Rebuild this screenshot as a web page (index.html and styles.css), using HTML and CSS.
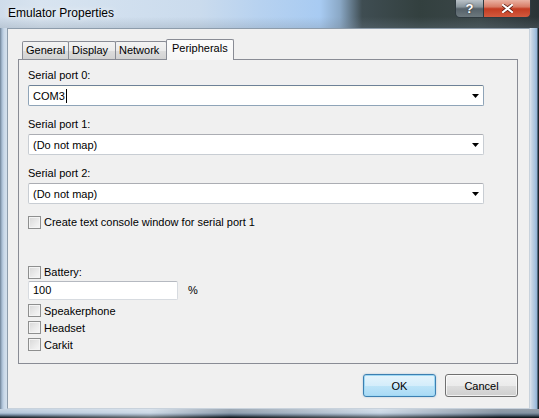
FILE: index.html
```html
<!DOCTYPE html>
<html>
<head>
<meta charset="utf-8">
<link rel="stylesheet" href="styles.css">
</head>
<body>
<div class="window">
  <div class="titlebar">
    <span class="title">Emulator Properties</span>
    <div class="caption-btns">
      <span class="cbtn help">?</span>
      <span class="cbtn close"><svg width="11" height="9" viewBox="0 0 11 9"><path d="M1 1 L10 8 M10 1 L1 8" stroke="#5a1a10" stroke-width="3.6" stroke-linecap="square"/><path d="M1 1 L10 8 M10 1 L1 8" stroke="#fff" stroke-width="2.2" stroke-linecap="square"/></svg></span>
    </div>
  </div>
  <div class="middle">
    <div class="frame-l"></div>
    <div class="client">
      <div class="tabs">
        <span class="tab t-general">General</span>
        <span class="tab t-display">Display</span>
        <span class="tab t-network">Network</span>
        <span class="tab t-periph selected">Peripherals</span>
      </div>
      <div class="panel">
        <div class="label first">Serial port 0:</div>
        <div class="combo focused"><span class="value">COM3<span class="caret"></span></span><svg class="arrow" width="7" height="4" viewBox="0 0 7 4"><polygon points="0,0 7,0 3.5,4" fill="#000"/></svg></div>
        <div class="label">Serial port 1:</div>
        <div class="combo"><span class="value">(Do not map)</span><svg class="arrow" width="7" height="4" viewBox="0 0 7 4"><polygon points="0,0 7,0 3.5,4" fill="#000"/></svg></div>
        <div class="label">Serial port 2:</div>
        <div class="combo"><span class="value">(Do not map)</span><svg class="arrow" width="7" height="4" viewBox="0 0 7 4"><polygon points="0,0 7,0 3.5,4" fill="#000"/></svg></div>
        <div class="check console"><span class="box"></span><span>Create text console window for serial port 1</span></div>
        <div class="check battery"><span class="box"></span><span>Battery:</span></div>
        <div class="battery-row"><div class="textbox">100</div><span class="pct">%</span></div>
        <div class="check first-opt"><span class="box"></span><span>Speakerphone</span></div>
        <div class="check"><span class="box"></span><span>Headset</span></div>
        <div class="check"><span class="box"></span><span>Carkit</span></div>
      </div>
      <div class="buttons">
        <span class="btn ok">OK</span>
        <span class="btn">Cancel</span>
      </div>
    </div>
    <div class="frame-r"></div>
  </div>
  <div class="frame-b"></div>
</div>
</body>
</html>
```
FILE: styles.css
```css
* { box-sizing: border-box; }
html, body { margin: 0; padding: 0; }
body {
  width: 539px;
  height: 418px;
  overflow: hidden;
  background: #1a2226;
  font-family: "Liberation Sans", Arial, sans-serif;
  font-size: 11px;
  color: #000;
}
.window {
  width: 539px;
  height: 418px;
  display: flex;
  flex-direction: column;
}
.titlebar {
  height: 28px;
  display: flex;
  align-items: flex-start;
  background:
    linear-gradient(to bottom, rgba(255,255,255,0) 60%, rgba(120,135,150,0.25) 100%),
    linear-gradient(to right, #cfdcea 0, #d8e4f0 40px, #cadbed 200px, #b7d2f0 260px, #a8cbf2 320px, #8aa8c6 340px, #3f4d52 362px, #33403f 420px, #3a4648 480px, #2a3336 539px);
}
.title {
  padding-left: 8px;
  line-height: 27px;
  font-size: 12px;
  color: #000;
  text-shadow: 0 0 6px rgba(255,255,255,0.9);
}
.caption-btns {
  margin-left: auto;
  margin-right: 8px;
  display: flex;
}
.cbtn {
  height: 18px;
  display: flex;
  align-items: center;
  justify-content: center;
  border: 1px solid #2f3a40;
  border-top: none;
}
.help {
  width: 28px;
  border-radius: 0 0 0 5px;
  border-right: none;
  background: linear-gradient(to bottom, #b9c2c8 0, #8a969d 40%, #56626a 52%, #6c787e 100%);
  color: #fff;
  font-weight: bold;
  font-size: 13px;
  text-shadow: 0 0 2px #222;
}
.close {
  width: 48px;
  border-radius: 0 0 5px 0;
  background: linear-gradient(to bottom, #eab3a4 0, #d87c66 40%, #c43c22 52%, #d35a3e 100%);
}
.middle {
  height: 381px;
  display: flex;
}
.frame-l {
  width: 7px;
  background: linear-gradient(to right, #6f8296 0, #a8bdd3 2px, #c9d8e8 4px, #d4e0ec 7px);
}
.frame-r {
  width: 9px;
  background: linear-gradient(to right, #dde5ee 0, #c3d3e3 2px, #a9c3de 5px, #8fb1d3 7px, #1c252c 8px);
}
.frame-b {
  height: 9px;
  background:
    linear-gradient(to right, rgba(255,255,255,0) 0, rgba(255,255,255,0.35) 150px, rgba(0,0,0,0.2) 230px, rgba(255,255,255,0.3) 380px, rgba(0,0,0,0.25) 500px),
    linear-gradient(to bottom, #c6d4e2 0, #b1c4d8 4px, #6e859b 6px, #25313c 8px, #0c1014 9px);
}
.client {
  width: 523px;
  background: #f0f0f0;
  border: 1px solid #8d9cab;
  border-right-color: #c8d2dc;
  border-bottom-color: #c8d2dc;
  padding-top: 10px;
  display: flex;
  flex-direction: column;
}
.tabs {
  height: 21px;
  display: flex;
  align-items: flex-end;
  margin-left: 14px;
  margin-bottom: -1px;
  position: relative;
  z-index: 1;
}
.tab {
  height: 18px;
  margin-bottom: 1px;
  border: 1px solid #898c95;
  border-bottom: none;
  border-radius: 2px 2px 0 0;
  background: linear-gradient(to bottom, #f3f3f3 0, #ebebeb 50%, #dddddd 51%, #d2d2d2 100%);
  line-height: 16px;
  padding-left: 3px;
}
.t-general { width: 47px; }
.t-display { width: 48px; margin-left: -1px; }
.t-network { width: 52px; margin-left: -1px; }
.t-periph {
  width: 68px;
  margin-left: -1px;
}
.tab.selected {
  height: 21px;
  margin-bottom: 0;
  background: linear-gradient(to bottom, #fcfcfc 0, #f6f6f6 100%);
  line-height: 16px;
  padding-left: 5px;
}
.panel {
  margin-left: 10px;
  width: 500px;
  border: 1px solid #898c95;
  background: #f0f0f0;
  padding: 0 0 10px 9px;
}
.label {
  line-height: 16px;
  margin-top: 10px;
  margin-bottom: 2px;
}
.label.first { margin-top: 7px; }
.combo {
  width: 456px;
  height: 21px;
  background: #fff;
  border: 1px solid #c8cdd3;
  border-top-color: #abadb3;
  border-radius: 2px;
  display: flex;
  align-items: center;
  padding: 0 4px 0 4px;
}
.combo.focused {
  border-color: #8fa4b8;
  border-top-color: #6d8196;
  background: linear-gradient(to bottom, #fffdf4 0, #fff 4px);
}
.value { flex: 1; display: flex; align-items: center; }
.caret {
  display: inline-block;
  width: 1px;
  height: 14px;
  background: #000;
  margin-left: 1px;
}
.arrow { flex: none; margin-right: 0px; }
.check {
  height: 17px;
  display: flex;
  align-items: center;
}
.check.console { margin-top: 10px; height: 16px; }
.check.battery { margin-top: 34px; height: 16px; }
.check.first-opt { margin-top: 2px; }
.box {
  width: 13px;
  height: 13px;
  border: 1px solid #8e8f8f;
  background: linear-gradient(135deg, #d7d7d7 0, #ececec 60%, #f7f7f7 100%);
  box-shadow: inset 0 0 0 1px #f4f4f4;
  margin-right: 3px;
  flex: none;
}
.battery-row {
  margin-top: 1px;
  display: flex;
  align-items: center;
}
.textbox {
  width: 150px;
  height: 19px;
  background: #fff;
  border: 1px solid #d7dbe0;
  border-top-color: #b5b9c0;
  border-radius: 2px;
  padding-left: 4px;
  line-height: 17px;
}
.pct { margin-left: 10px; margin-top: -2px; }
.buttons {
  margin-top: 10px;
  margin-right: 11px;
  display: flex;
  justify-content: flex-end;
  gap: 9px;
}
.btn {
  width: 73px;
  height: 23px;
  border: 1px solid #707070;
  border-radius: 3px;
  background: linear-gradient(to bottom, #f2f2f2 0, #ebebeb 50%, #dddddd 51%, #cfcfcf 100%);
  box-shadow: inset 0 0 0 1px rgba(255,255,255,0.7);
  display: flex;
  align-items: center;
  justify-content: center;
}
.btn.ok {
  border-color: #3c7fb1;
  background: linear-gradient(to bottom, #e5f4fc 0, #d4edfb 50%, #bde4f8 51%, #a9daf5 100%);
  box-shadow: inset 0 0 0 1px #9fd8f4, 0 0 2px rgba(60,127,177,0.4);
}
```
